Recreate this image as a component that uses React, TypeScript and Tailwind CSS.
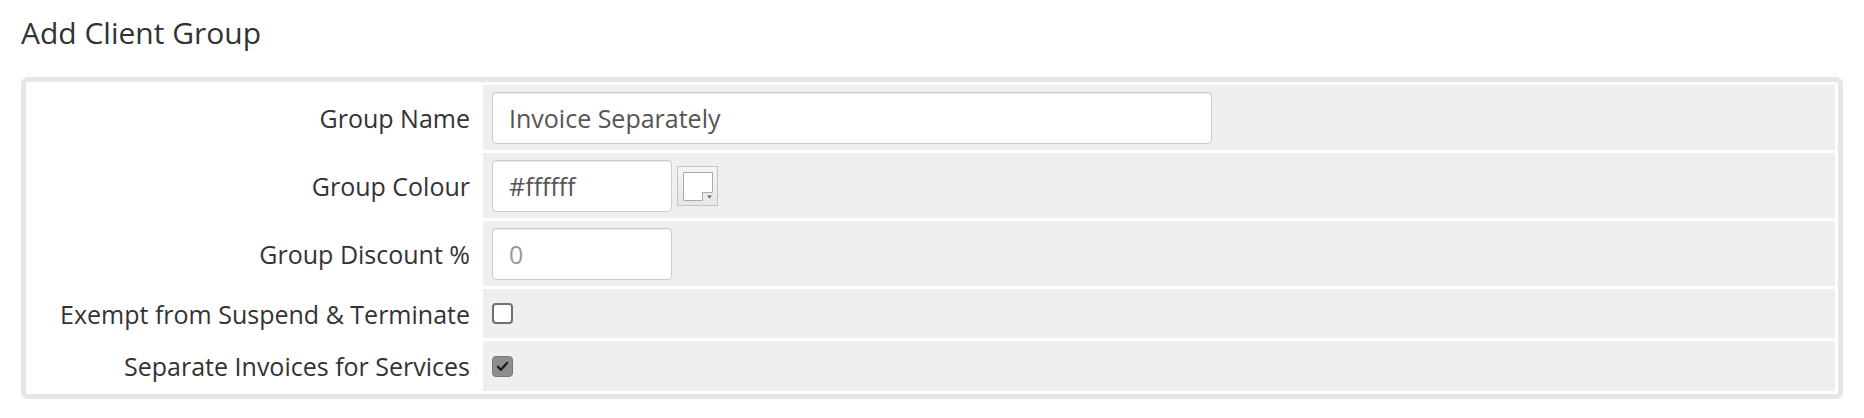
import React from "react";

function Checkbox({ checked }: { checked?: boolean }) {
    return checked ? (
        <span className="flex h-[21px] w-[21px] items-center justify-center rounded-[4px] border border-[#777] bg-[#8e8e8e]">
            <svg width="15" height="15" viewBox="0 0 15 15">
                <path d="M3 7.8 L6 10.8 L12 4" fill="none" stroke="#1f1f1f" strokeWidth="2.4" strokeLinecap="round" strokeLinejoin="round" />
            </svg>
        </span>
    ) : (
        <span className="block h-[21px] w-[21px] rounded-[4px] border-2 border-[#707070] bg-white" />
    );
}

// spectrum style colour picker trigger
function Swatch() {
    return (
        <svg width="41" height="40" viewBox="0 0 41 40" className="ml-[5px]">
            <defs>
                <linearGradient id="sw" x1="0" y1="0" x2="0" y2="1">
                    <stop offset="0" stopColor="#f6f6f6" />
                    <stop offset="1" stopColor="#e6e6e6" />
                </linearGradient>
            </defs>
            <rect x="0.5" y="0.5" width="40" height="39" fill="url(#sw)" stroke="#c4c4c4" />
            <path d="M6.5 6.5 H35.5 V26.5 H25.5 V34.5 H6.5 Z" fill="#fff" stroke="#aaaaaa" />
            <polygon points="30,29.5 35,29.5 32.5,32.5" fill="#666" />
        </svg>
    );
}

const input =
    "h-[52px] rounded-[4px] border border-[#cccccc] bg-white px-[16px] text-[25px] text-[#555] shadow-[inset_0_1px_1px_rgba(0,0,0,0.075)] outline-none placeholder:text-[#999]";

const rows: { label: string; h: string; field: React.ReactNode }[] = [
    {
        label: "Group Name",
        h: "h-[65px]",
        field: <input className={`${input} w-[720px]`} defaultValue="Invoice Separately" />,
    },
    {
        label: "Group Colour",
        h: "h-[65px]",
        field: (
            <div className="flex items-center">
                <input className={`${input} w-[180px]`} defaultValue="#ffffff" />
                <Swatch />
            </div>
        ),
    },
    {
        label: "Group Discount %",
        h: "h-[65px]",
        field: <input className={`${input} w-[180px]`} placeholder="0" />,
    },
    {
        label: "Exempt from Suspend & Terminate",
        h: "h-[49px]",
        field: <Checkbox />,
    },
    {
        label: "Separate Invoices for Services",
        h: "h-[50px]",
        field: <Checkbox checked />,
    },
];

export default function App() {
    return (
        <div className="min-h-[418px] bg-white px-[21px] pt-[15px] font-['Open_Sans',sans-serif]">
            <h1 className="mb-[26px] text-[30px] leading-[36px] font-normal text-[#333]">Add Client Group</h1>

            <div className="rounded-[7px] border-[5px] border-[#e4e7e9]">
                <table className="w-full border-separate border-spacing-[3px]">
                    <tbody>
                        {rows.map(r => (
                            <tr key={r.label} className={r.h}>
                                <td className="w-[451px] py-0 pr-[10px] text-right align-middle text-[25px] leading-[34px] text-[#333]">
                                    {r.label}
                                </td>
                                <td className="bg-[#efefef] py-0 pl-[9px] align-middle">{r.field}</td>
                            </tr>
                        ))}
                    </tbody>
                </table>
            </div>
        </div>
    );
}
